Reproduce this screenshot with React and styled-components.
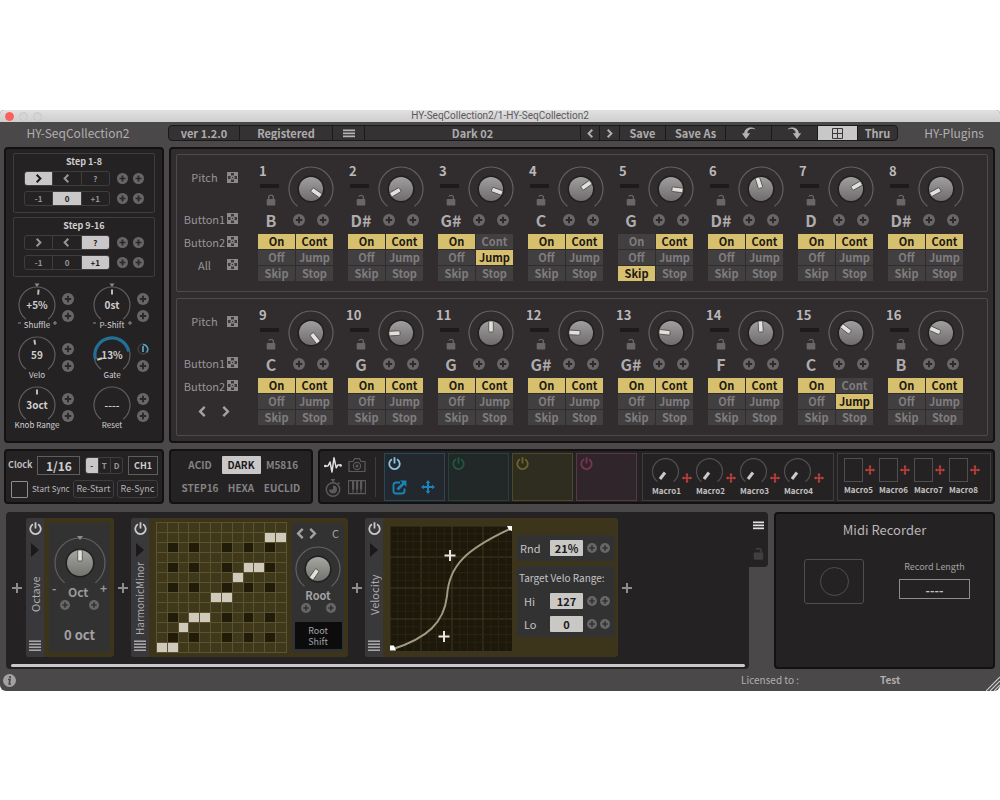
import { useState } from 'react';
import styled, { createGlobalStyle } from 'styled-components';

const GlobalStyle = createGlobalStyle`
  *, *::before, *::after { box-sizing: border-box; }
  body {
    margin: 0;
    background: #fff;
    font-family: "Noto Sans CJK JP", "Noto Sans", sans-serif;
    font-size: 12px;
    line-height: 16px;
    color: #a3a1a2;
  }
  button, input, select {
    font: inherit;
    color: inherit;
    margin: 0;
    padding: 0;
    border: 0;
    border-radius: 0;
    background: none;
    appearance: none;
  }
  button { cursor: pointer; white-space: nowrap; }
  svg { display: block; flex: none; }
  h1, h2, p { margin: 0; font: inherit; }
`;

/* ---------- shell ---------- */

const Page = styled.div`
  padding-top: 110px;
  overflow: hidden;
`;

const PluginWindow = styled.main`
  background: #4a4849;
  border-radius: 4px 4px 6px 6px;
  overflow: hidden;
`;

const TitleBar = styled.header`
  display: grid;
  grid-template-columns: 1fr auto 1fr;
  align-items: center;
  height: 12px;
  padding: 0 5px;
  background: linear-gradient(#e2e1e2, #cfcecf);
  font: 10px/12px Roboto, sans-serif;
  color: #5a5859;
`;

const Lights = styled.div`
  display: flex;
  gap: 5px;
`;

const Light = styled.span`
  width: 9px;
  height: 9px;
  border-radius: 50%;
  background: ${({ $color }) => $color};
  border: 1px solid ${({ $edge }) => $edge};
`;

const TopBar = styled.div`
  display: flex;
  align-items: center;
  height: 25px;
  padding-bottom: 3px;
`;

const Brand = styled.h1`
  width: ${({ $right }) => ($right ? 102 : 168)}px;
  padding: ${({ $right }) => ($right ? '0 0 0 10px' : '0 12px 0 0')};
  text-align: center;
  font-size: 12px;
  color: #b1afb0;
`;

const Toolbar = styled.nav`
  flex: 1;
  display: flex;
  height: 16px;
  border: 1px solid #1b191a;
  border-radius: 4px;
  background: #353233;
  overflow: hidden;
`;

const ToolButton = styled.button`
  flex: ${({ $grow }) => ($grow ? 1 : 'none')};
  width: ${({ $w }) => $w}px;
  display: flex;
  align-items: center;
  justify-content: center;
  font-size: 11px;
  font-weight: 700;
  line-height: 14px;
  color: ${({ $active }) => ($active ? '#2c292a' : '#aeacad')};
  background: ${({ $active }) => ($active ? '#c9c8c9' : 'transparent')};

  & + & { border-left: 1px solid #1b191a; }
`;

const Row = styled.div`
  display: flex;
  gap: ${({ $gap }) => $gap}px;
  padding: 0 5px 0 4px;
  margin-bottom: ${({ $below }) => $below}px;
`;

const Panel = styled.section`
  border: 2px solid #131112;
  border-radius: 4px;
  background: #242223;
`;

/* ---------- side panel ---------- */

const SidePanel = styled(Panel)`
  width: 160px;
  flex: none;
  padding: 4px 7px 0;
`;

const SideGroup = styled.div`
  height: 60px;
  margin-bottom: 4px;
  padding-left: 10px;
  border: 1px solid #3f3d3e;
  border-radius: 2px;
`;

const SideTitle = styled.h2`
  height: 17px;
  margin-left: -10px;
  text-align: center;
  font-size: 9px;
  font-weight: 700;
  color: #cfcdce;
`;

const SegmentRow = styled.div`
  display: flex;
  align-items: center;
  gap: 5px;
  height: 15px;
  margin-bottom: 5px;
`;

const Segments = styled.div`
  display: flex;
  width: 86px;
  height: 15px;
  margin-right: 2px;
  border: 1px solid #3f3d3e;
  border-radius: 3px;
  overflow: hidden;
`;

const Segment = styled.button`
  flex: 1;
  display: flex;
  align-items: center;
  justify-content: center;
  font-size: 8px;
  font-weight: 700;
  line-height: 13px;
  color: ${({ $active }) => ($active ? '#1b191a' : '#979596')};
  background: ${({ $active }) => ($active ? '#c9c7c8' : 'transparent')};

  & + & { border-left: 1px solid #3f3d3e; }
`;

const DialGrid = styled.div`
  display: grid;
  grid-template-columns: 1fr 1fr;
  grid-auto-rows: 50px;
  padding-top: 1px;
  column-gap: 8px;
`;

const DialCell = styled.div`
  display: flex;
`;

const DialFace = styled.div`
  display: grid;
  justify-items: center;
  flex: none;
  width: 50px;
  margin-left: -1px;

  > * { grid-area: 1 / 1; }
`;

const DialValue = styled.span`
  align-self: start;
  padding-top: 15px;
  font-size: 10px;
  font-weight: 700;
  color: #cfcdce;
`;

const DialLabel = styled.span`
  align-self: end;
  font-size: 8px;
  line-height: 14px;
  white-space: nowrap;
  color: #d3d1d2;
`;

const DialPluses = styled.div`
  display: flex;
  flex-direction: column;
  gap: 5px;
  padding-top: 11px;
`;

const PlusBtn = styled.button`
  display: block;
`;

/* ---------- sequencer ---------- */

const Sequencer = styled(Panel)`
  flex: 1;
  min-width: 0;
  padding: 5px;
  background: #312d2e;
`;

const StepBank = styled.div`
  display: flex;
  height: 138px;
  padding: 11px 9px 0 0;
  border: 1px solid #4d4a4b;
  border-radius: 2px;

  & + & { margin-top: 6px; }
`;

const BankLabels = styled.div`
  flex: none;
  width: 81px;
  padding-left: 7px;
`;

const BankLabel = styled.div`
  display: flex;
  align-items: center;
  gap: 2px;
  height: ${({ $first }) => ($first ? 22 : 23)}px;
  margin-bottom: ${({ $first }) => ($first ? 19 : 0)}px;
  font-size: 11px;
  white-space: nowrap;
  color: #979596;

  span {
    display: flex;
    justify-content: center;
    width: 41px;
  }
`;

const BankArrows = styled.div`
  display: flex;
  justify-content: center;
  gap: 12px;
  padding: 9px 14px 0 0;
`;

const StepGrid = styled.div`
  flex: 1;
  display: grid;
  grid-template-columns: repeat(8, 1fr);
`;

const StepCell = styled.div`
  width: 76px;
`;

const StepTop = styled.div`
  display: flex;
  height: 46px;
`;

const StepInfo = styled.div`
  display: flex;
  flex-direction: column;
  width: 30px;
`;

const StepNumber = styled.span`
  height: 18px;
  margin-left: ${({ $wide }) => ($wide ? -2 : 1)}px;
  font-size: 13px;
  font-weight: 700;
  line-height: 9px;
  color: #bab8b9;
`;

const Led = styled.span`
  width: 19px;
  height: 4px;
  margin: 0 0 6px 2px;
  background: #1d1a1b;
`;

const LockButton = styled.button`
  width: 10px;
  margin-left: 8px;
`;

const NoteRow = styled.div`
  display: flex;
  align-items: center;
  height: 16px;
  margin-bottom: 6px;
`;

const Note = styled.span`
  width: 26px;
  margin-right: 9px;
  text-align: center;
  font-size: 16px;
  font-weight: 700;
  color: #aeacad;
`;

const NotePluses = styled.div`
  display: flex;
  gap: 12px;
`;

const Modes = styled.div`
  display: grid;
  grid-template-columns: 1fr 1fr;
  grid-auto-rows: 15px;
  gap: 1px;
  width: 75px;
`;

const ModeButton = styled.button`
  line-height: 15px;
  font-size: 11px;
  font-weight: 700;
  color: ${({ $on }) => ($on ? '#1c1717' : '#7f7d7e')};
  background: ${({ $on }) => ($on ? '#d6c06d' : '#423f41')};
`;

/* ---------- middle strip ---------- */

const ClockPanel = styled(Panel)`
  width: 160px;
  flex: none;
  height: 55px;
  padding: 4px 4px 0 2px;
`;

const ClockLine = styled.div`
  display: flex;
  align-items: center;
  justify-content: space-between;
  height: 20px;
  margin-bottom: 4px;
  white-space: nowrap;
  color: #bdbbbc;
`;

const ClockLabel = styled.label`
  display: flex;
  align-items: center;
  gap: 4px;
  font-size: ${({ $small }) => ($small ? 8 : 9)}px;
  font-weight: ${({ $small }) => ($small ? 400 : 700)};
  padding-left: ${({ $small }) => ($small ? 3 : 0)}px;
`;

const BoxSelect = styled.select`
  width: ${({ $w }) => $w}px;
  height: 19px;
  border: 1px solid #5f5d5e;
  text-align: center;
  text-align-last: center;
  font-size: ${({ $small }) => ($small ? 9 : 12)}px;
  font-weight: 700;
  line-height: 17px;
  color: #cfcdce;
`;

const NoteKinds = styled(Segments)`
  width: 38px;
  height: 17px;
  margin: 0;
`;

const CheckBox = styled.input`
  width: 17px;
  height: 17px;
  border: 1px solid #8e8c8d;
  border-radius: 1px;

  &:checked { background: #8e8c8d; }
`;

const OutlineButton = styled.button`
  width: 41px;
  height: 18px;
  border: 1px solid #3f3d3e;
  border-radius: 3px;
  font-size: 9px;
  color: #b5b3b4;
`;

const ModePanel = styled(Panel)`
  flex: none;
  width: 144px;
  display: grid;
  grid-template-columns: repeat(3, 39px);
  grid-auto-rows: 18px;
  gap: 5px 2px;
  align-content: center;
  justify-content: center;
`;

const EngineButton = styled.button`
  font-size: 10px;
  font-weight: 700;
  line-height: 18px;
  border-radius: 1px;
  color: ${({ $active }) => ($active ? '#1b191a' : '#858384')};
  background: ${({ $active }) => ($active ? '#c9c7c8' : 'transparent')};
`;

const ModPanel = styled(Panel)`
  flex: 1;
  display: flex;
  align-items: center;
  padding: 0 2px 0 3px;
`;

const ModIcons = styled.div`
  display: grid;
  grid-template-columns: 20px 20px;
  gap: 6px 4px;
  padding: 0 8px 0 0;
  margin-right: 8px;
  border-right: 1px solid #3f3d3e;

  svg { margin: 0 auto; }
`;

const ModSlots = styled.div`
  flex: 1;
  display: grid;
  grid-template-columns: repeat(4, 1fr);
  gap: 3px;
  margin-right: 5px;
`;

const ModSlot = styled.div`
  display: flex;
  flex-direction: column;
  justify-content: space-between;
  height: 48px;
  padding: 3px 3px 5px;
  border: 1px solid ${({ $edge }) => $edge};
  background: ${({ $fill }) => $fill};
`;

const SlotTools = styled.div`
  display: flex;
  justify-content: space-between;
  padding: 0 6px 0 4px;
`;

const MacroBox = styled.div`
  flex: none;
  display: flex;
  width: ${({ $w }) => $w}px;
  height: 48px;
  margin-left: ${({ $gap }) => $gap}px;
  padding: 4px 0 0 ${({ $pad }) => $pad}px;
  border: 1px solid #3f3d3e;
`;

const Macro = styled.div`
  width: ${({ $w }) => $w}px;
  font-size: 8px;
  line-height: 12px;
  font-weight: 700;
  color: #c2c0c1;
`;

const MacroTop = styled.div`
  display: flex;
  align-items: center;
  gap: 2px;
  height: 24px;
  margin-bottom: 2px;
`;

const MacroDial = styled(MacroTop)`
  align-items: flex-end;
  gap: 3px;
  height: 27px;
  margin-bottom: 0;

  svg + svg { margin-bottom: 2px; }
`;

const MacroPad = styled.button`
  width: 19px;
  height: 24px;
  border: 1px solid #504e4f;
`;

/* ---------- effects rack ---------- */

const Rack = styled.section`
  flex: 1;
  display: flex;
  min-width: 0;
  margin-left: 2px;
`;

const RackBody = styled.div`
  flex: 1;
  min-width: 0;
  height: 157px;
  padding: 6px 4px 0 5px;
  border-radius: 4px 0 4px 4px;
  background: #242223;
`;

const RackTab = styled.div`
  display: flex;
  flex-direction: column;
  align-items: center;
  gap: 17px;
  width: 19px;
  height: 55px;
  padding-top: 9px;
  border-radius: 0 4px 4px 0;
  background: #242223;
`;

const Modules = styled.div`
  display: flex;
  align-items: center;
  height: 139px;
  margin-bottom: 7px;
`;

const ScrollTrack = styled.div`
  height: 3px;
  border-radius: 2px;
  background: #cbc9ca;
`;

const AddButton = styled.button`
  width: ${({ $first }) => ($first ? 15 : 17)}px;
  height: 20px;
  display: flex;
  align-items: center;
  justify-content: ${({ $first }) => ($first ? 'flex-start' : 'center')};
  padding-left: ${({ $first }) => ($first ? 1 : 0)}px;
`;

const Module = styled.article`
  display: flex;
  height: 139px;
  border-radius: 3px;
  overflow: hidden;
  background: #3c351b;
`;

const ModuleStrip = styled.div`
  display: flex;
  flex-direction: column;
  align-items: center;
  width: 18px;
  padding: 4px 0 5px;
  background: #39383a;

  svg + svg { margin-top: 8px; }
`;

const ModuleName = styled.h2`
  flex: 1;
  display: flex;
  align-items: center;
  justify-content: center;
  padding-top: ${({ $long }) => ($long ? 0 : 8)}px;
  writing-mode: vertical-rl;
  transform: rotate(180deg);
  font-size: ${({ $long }) => ($long ? 10 : 11)}px;
  line-height: 18px;
  white-space: nowrap;
  color: #aeacad;
`;

const ModuleCard = styled.div`
  display: flex;
  flex-direction: column;
  align-items: center;
  width: ${({ $w }) => $w}px;
  margin: 5px 4px 5px 5px;
  padding-top: ${({ $top }) => $top}px;
  background: #323233;
`;

const KnobCaption = styled.div`
  display: flex;
  justify-content: space-between;
  width: 55px;
  margin-top: -6px;
  font-weight: 700;
  color: #9a9899;

  span:not(:nth-child(2)) { line-height: 8px; }
`;

const PlusPair = styled.div`
  display: flex;
  gap: ${({ $gap }) => $gap}px;
`;

const OctValue = styled.output`
  margin-top: 17px;
  font-size: 13px;
  font-weight: 700;
`;

const ScaleGrid = styled.div`
  display: grid;
  grid-template-columns: repeat(12, 1fr);
  grid-template-rows: repeat(13, 9px);
  gap: 1px;
  width: 131px;
  align-self: center;
  margin-left: 7px;
  padding: 1px;
  background: #5c5330;
`;

const ScaleCell = styled.span`
  background: ${({ $kind }) =>
    $kind === 'on' ? '#cfcabc' : $kind === 'dark' ? '#211b0a' : '#40381a'};
`;

const RootHead = styled.div`
  display: flex;
  align-items: center;
  align-self: stretch;
  gap: 1px;
  margin-bottom: 7px;
  padding: 0 5px 0 3px;
  line-height: 12px;
  font-size: 11px;

  span { margin-left: auto; }
`;

const RootName = styled.span`
  margin-top: -4px;
  margin-bottom: 1px;
  line-height: 14px;
  font-size: 11px;
  font-weight: 700;
`;

const RootShift = styled.button`
  width: 47px;
  height: 27px;
  margin-top: 9px;
  background: #0d0c0d;
  font-size: 9px;
  line-height: 11px;
`;

const CurveWrap = styled.div`
  padding: 8px 5px 0 7px;
`;

const VeloSide = styled.div`
  display: flex;
  flex-direction: column;
  gap: 5px;
  padding: 17px 3px 0 0;
`;

const VeloCard = styled.div`
  display: flex;
  flex-direction: column;
  gap: 1px;
  width: 98px;
  padding: 2px;
  border-radius: 2px;
  background: #323233;
  color: #c6c4c5;
`;

const VeloTitle = styled.p`
  height: 21px;
  line-height: 19px;
  font-size: 10px;
  white-space: nowrap;
`;

const Field = styled.div`
  display: flex;
  align-items: center;
  gap: 3px;
  height: 22px;
  font-size: 11px;

  label { width: 28px; padding-left: ${({ $inset }) => ($inset ? 5 : 1)}px; }
`;

const NumberInput = styled.input`
  width: 33px;
  height: 16px;
  margin-right: 1px;
  border-radius: 1px;
  background: #c9c8c5;
  color: #1c1a1a;
  text-align: center;
  font-weight: 700;
`;

/* ---------- midi recorder and footer ---------- */

const Recorder = styled(Panel)`
  width: 221px;
  height: 157px;
  flex: none;
  padding-top: 6px;
  text-align: center;
`;

const RecorderTitle = styled.h2`
  font-size: 13px;
  line-height: 20px;
  color: #b9b7b8;
`;

const RecorderRow = styled.div`
  display: flex;
  justify-content: space-between;
  padding: 19px 23px 0 28px;
`;

const RecordButton = styled.button`
  display: grid;
  place-items: center;
  width: 60px;
  height: 45px;
  border: 1px solid #504e4f;
  border-radius: 3px;

  &::before {
    content: '';
    width: 29px;
    height: 29px;
    border: 1px solid #504e4f;
    border-radius: 50%;
  }
`;

const RecordLength = styled.label`
  display: flex;
  flex-direction: column;
  align-items: center;
  gap: 4px;
  font-size: 9px;

  input {
    width: 71px;
    height: 20px;
    border: 1px solid #8e8c8d;
    text-align: center;
    font-size: 12px;
    font-weight: 700;
    color: #c4c2c3;
  }
`;

const Footer = styled.footer`
  display: flex;
  align-items: center;
  height: 22px;
  padding-left: 3px;
  font-size: 10px;
`;

const License = styled.p`
  display: flex;
  margin-left: auto;
  color: #b1afb0;

  span { width: 139px; }
  strong { width: 106px; font-weight: 700; }
`;

/* ---------- drawings ---------- */

// point on a circle, angle in degrees clockwise from the top
const polar = (c, r, deg) => {
  const a = ((deg - 90) * Math.PI) / 180;
  return [c + r * Math.cos(a), c + r * Math.sin(a)];
};

const arcPath = (c, r, from, to) => {
  const [x1, y1] = polar(c, r, from);
  const [x2, y2] = polar(c, r, to);
  return `M${x1} ${y1}A${r} ${r} 0 ${to - from > 180 ? 1 : 0} 1 ${x2} ${y2}`;
};

function Knob({ angle, size = 46, ring = 22, body = 12, warm, tick }) {
  const c = size / 2;
  const id = `knob-${body}-${warm ? 'w' : 'n'}`;
  return (
    <svg width={size} height={size} viewBox={`0 0 ${size} ${size}`}>
      <defs>
        <linearGradient id={id} x1="0" y1="0" x2="0" y2="1">
          <stop offset="0" stopColor={warm ? '#a7a7a2' : '#a19e9f'} />
          <stop offset="1" stopColor={warm ? '#73736e' : '#6f6c6d'} />
        </linearGradient>
      </defs>
      <path d={arcPath(c, ring, -142, 142)} fill="none" stroke="#636061" strokeWidth="1.2" />
      {tick && <path d={`M${c - 3} 0h6l-3 4z`} fill="#8e8c8d" />}
      <circle cx={c} cy={c} r={body + 1.5} fill="#211e1f" />
      <circle cx={c} cy={c} r={body} fill={`url(#${id})`} />
      <rect
        x={c - 2.3}
        y={c - body}
        width="4.6"
        height="11"
        rx="1"
        fill="#e2e0da"
        stroke="#4a4748"
        strokeWidth="0.8"
        transform={`rotate(${angle} ${c} ${c})`}
      />
    </svg>
  );
}

function PlusIcon({ size = 12, fill = '#686667', cross = '#2b2829' }) {
  return (
    <svg width={size} height={size} viewBox="0 0 12 12">
      <circle cx="6" cy="6" r="6" fill={fill} />
      <path d="M6 2.8v6.4M2.8 6h6.4" stroke={cross} strokeWidth="1.9" />
    </svg>
  );
}

const Plus = ({ size, fill, cross }) => (
  <PlusBtn aria-label="Assign modulation">
    <PlusIcon size={size} fill={fill} cross={cross} />
  </PlusBtn>
);

const Dice = () => (
  <svg width="11" height="11" viewBox="0 0 11 11">
    <rect x="0.5" y="0.5" width="10" height="10" fill="#3a3738" stroke="#8a8889" />
    <g fill="#8a8889">
      <rect x="1" y="1" width="3" height="3" />
      <rect x="7" y="1" width="3" height="3" />
      <rect x="1" y="7" width="3" height="3" />
      <rect x="7" y="7" width="3" height="3" />
      <circle cx="5.5" cy="5.5" r="2.2" />
    </g>
    <circle cx="5.5" cy="5.5" r="0.8" fill="#3a3738" />
  </svg>
);

const Lock = ({ open, size = 10, color = '#686667' }) => (
  <svg width={size} height={size * 1.2} viewBox="0 0 10 12">
    <rect x="0.7" y="5" width="8.6" height="6.6" rx="0.8" fill={color} />
    <path
      d={open ? 'M3 2.6C3.4 1 6.9 .9 7.4 2.9V5' : 'M2.7 5V3.2C2.7 .4 7.3 .4 7.3 3.2V5'}
      fill="none"
      stroke={color}
      strokeWidth="1.4"
    />
  </svg>
);

const Chevron = ({ left, size = 9, color = 'currentColor', weight = 2 }) => (
  <svg width={size} height={size} viewBox="0 0 9 9">
    <path
      d={left ? 'M6.3 .8L2.6 4.5l3.7 3.7' : 'M2.7 .8l3.7 3.7-3.7 3.7'}
      fill="none"
      stroke={color}
      strokeWidth={weight}
    />
  </svg>
);

const Burger = ({ w = 12, lines = 3, color = '#b5b3b4' }) => (
  <svg width={w} height={lines * 3} viewBox={`0 0 ${w} ${lines * 3}`}>
    {Array.from({ length: lines }, (_, i) => (
      <rect key={i} y={i * 3 + 0.5} width={w} height={lines === 3 ? 1.7 : 1.4} fill={color} />
    ))}
  </svg>
);

const Power = ({ color, size = 13 }) => (
  <svg width={size} height={size} viewBox="0 0 13 13">
    <path d="M4 2.3A5.2 5.2 0 1 0 9 2.3M6.5 .3V6.5" fill="none" stroke={color} strokeWidth="1.8" />
  </svg>
);

const CurvedArrow = ({ flip }) => (
  <svg width="15" height="12" viewBox="0 0 15 12">
    <path
      d="M14.5 2.5C12 -.6 3.8 -.2 3.2 6.3H.8L5 12l4.2-5.7H6.4C6.4 2.6 10 .8 14.5 2.5z"
      fill="#b5b3b4"
      transform={flip ? 'matrix(-1 0 0 1 15 0)' : undefined}
    />
  </svg>
);

const GridIcon = () => (
  <svg width="11" height="11" viewBox="0 0 11 11">
    <path d="M.5 .5h10v10H.5zM5.5 .5v10M.5 5.5h10" fill="none" stroke="#3a3738" />
  </svg>
);

const Cross = ({ size = 10, color = '#8e8c8d', w = 2 }) => (
  <svg width={size} height={size} viewBox="0 0 10 10">
    <path d="M5 0v10M0 5h10" stroke={color} strokeWidth={w} />
  </svg>
);

const MoveCross = ({ size = 10, color }) => (
  <svg width={size} height={size} viewBox="0 0 14 14">
    <path d="M7 1v12M1 7h12" stroke={color} strokeWidth="2" />
    <path d="M7 0l2.3 3H4.7zM7 14l2.3-3H4.7zM0 7l3-2.3v4.6zM14 7l-3-2.3v4.6z" fill={color} />
  </svg>
);

const Pulse = () => (
  <svg width="18" height="16" viewBox="0 0 18 16">
    <path
      d="M1 9h3l2-4 2 10L10 .8l2.3 10L13.8 8H17"
      fill="none"
      stroke="#e2e0e1"
      strokeWidth="1.5"
      strokeLinejoin="round"
    />
    <circle cx="1.3" cy="9" r="1.3" fill="#e2e0e1" />
    <circle cx="16.7" cy="8.5" r="1.3" fill="#e2e0e1" />
  </svg>
);

const Camera = () => (
  <svg width="18" height="16" viewBox="0 0 18 16">
    <path d="M1 4.5h4l1.5-2.8h5L13 4.5h4V14.5H1z" fill="none" stroke="#5c5a5b" strokeWidth="1.2" strokeLinejoin="round" />
    <circle cx="9" cy="9" r="3.6" fill="none" stroke="#5c5a5b" strokeWidth="1.2" />
    <circle cx="9" cy="9" r="1.5" fill="#5c5a5b" />
  </svg>
);

const Stopwatch = () => (
  <svg width="16" height="18" viewBox="0 0 16 18">
    <circle cx="8" cy="10.5" r="6.7" fill="none" stroke="#5c5a5b" strokeWidth="1.5" />
    <path d="M8 10.5V6.5A4 4 0 1 1 4 10.5z" fill="#5c5a5b" />
    <path d="M6 .8h4M8 .8v3M13 3.5l1.5 1.5" stroke="#5c5a5b" strokeWidth="1.5" />
  </svg>
);

const Piano = () => (
  <svg width="18" height="16" viewBox="0 0 18 16">
    <path d="M.6 1.6h16.8v13H.6zM5 10v5M9 10v5M13 10v5" fill="none" stroke="#5c5a5b" strokeWidth="1.1" />
    <path d="M4 1.6h2.2v9H4zM8 1.6h2.2v9H8zM12 1.6h2.2v9H12z" fill="#5c5a5b" />
  </svg>
);

const OpenIcon = () => (
  <svg width="15" height="15" viewBox="0 0 15 15">
    <path
      d="M8 2.5H4a2.5 2.5 0 0 0-2.5 2.5v6A2.5 2.5 0 0 0 4 13.5h6a2.5 2.5 0 0 0 2.5-2.5V8.5"
      fill="none"
      stroke="#1a84b8"
      strokeWidth="1.9"
    />
    <path d="M5.5 9.5L11.5 3.5" stroke="#1a84b8" strokeWidth="2.8" />
    <path d="M8 .6H14.4V7z" fill="#1a84b8" />
  </svg>
);

const Triangle = () => (
  <svg width="10" height="14" viewBox="0 0 10 14">
    <path d="M1 0l8 7-8 7z" fill="#1b191a" />
  </svg>
);

function VelocityCurve() {
  const minor = Array.from({ length: 16 }, (_, i) => i * 7.75);
  return (
    <svg width="122" height="125" viewBox="0 0 122 125">
      <rect width="122" height="125" fill="#1c180b" />
      {minor.map((p, i) => (
        <path key={i} d={`M${p} 0V125M0 ${p}H122`} stroke={i % 4 === 0 ? '#403a20' : '#29230f'} strokeWidth="1" />
      ))}
      <path d="M3 123C37 112 54 97 57 70C59 40 75 24 120 3" fill="none" stroke="#a09a84" strokeWidth="2" />
      <path d="M0 119.5h4l2 5H0zM117 0h5v5l-3-1z" fill="#fff" />
      <path d="M60 24v11M54.5 29.5h11M54 105v11M48.5 110.5h11" stroke="#e8e6df" strokeWidth="2" />
    </svg>
  );
}

/* ---------- data ---------- */

const banks = [
  {
    steps: [
      { note: 'B', angle: 125, locked: true },
      { note: 'D#', angle: 240 },
      { note: 'G#', angle: 110, right: 'Jump' },
      { note: 'C', angle: 55 },
      { note: 'G', angle: 97, left: 'Skip' },
      { note: 'D#', angle: -18 },
      { note: 'D', angle: 60 },
      { note: 'D#', angle: 242 },
    ],
    labels: ['Pitch', 'Button1', 'Button2', 'All'],
  },
  {
    steps: [
      { note: 'C', angle: 142 },
      { note: 'G', angle: 267 },
      { note: 'G', angle: 0 },
      { note: 'G#', angle: 273 },
      { note: 'G#', angle: 276 },
      { note: 'F', angle: -3 },
      { note: 'C', angle: -52, right: 'Jump' },
      { note: 'B', angle: -66 },
    ],
    labels: ['Pitch', 'Button1', 'Button2'],
  },
];

const dials = [
  { name: 'Shuffle', value: '+5%', mark: 6, bipolar: true },
  { name: 'P-Shift', value: '0st', mark: 0, bipolar: true },
  { name: 'Velo', value: '59', mark: -10 },
  { name: 'Gate', value: '13%', mark: -108, amount: true },
  { name: 'Knob Range', value: '3oct', mark: 0 },
  { name: 'Reset', value: '----' },
];

const engines = ['ACID', 'DARK', 'M5816', 'STEP16', 'HEXA', 'EUCLID'];

const slots = [
  { edge: '#26485a', fill: '#22282d', power: '#8cc4e0', open: true },
  { edge: '#24423a', fill: '#222827', power: '#1c5a40' },
  { edge: '#4e4a28', fill: '#2f2c20', power: '#6e6428' },
  { edge: '#573846', fill: '#30252a', power: '#7c3450' },
];

const scaleOn = ['10,1', '11,1', '8,4', '9,4', '7,5', '5,7', '6,7', '3,9', '4,9', '2,10', '0,12', '1,12'];
const darkCols = [1, 3, 6, 8, 10];
const darkRows = [2, 4, 6, 9, 11];

const scaleCells = Array.from({ length: 13 * 12 }, (_, i) => {
  const col = i % 12;
  const row = Math.floor(i / 12);
  if (scaleOn.includes(`${col},${row}`)) return 'on';
  return darkCols.includes(col) && darkRows.includes(row) ? 'dark' : 'plain';
});

/* ---------- components ---------- */

function StepSettings({ title, direction, offset }) {
  const [dir, setDir] = useState(direction);
  const [shift, setShift] = useState(offset);

  return (
    <SideGroup>
      <SideTitle>{title}</SideTitle>
      <SegmentRow>
        <Segments>
          <Segment $active={dir === 'fwd'} onClick={() => setDir('fwd')} aria-label="Forward">
            <Chevron />
          </Segment>
          <Segment $active={dir === 'back'} onClick={() => setDir('back')} aria-label="Backward">
            <Chevron left />
          </Segment>
          <Segment $active={dir === '?'} onClick={() => setDir('?')}>?</Segment>
        </Segments>
        <Plus size={11} />
        <Plus size={11} />
      </SegmentRow>
      <SegmentRow>
        <Segments>
          {['-1', '0', '+1'].map((v) => (
            <Segment key={v} $active={shift === v} onClick={() => setShift(v)}>{v}</Segment>
          ))}
        </Segments>
        <Plus size={11} />
        <Plus size={11} />
      </SegmentRow>
    </SideGroup>
  );
}

function Dial({ name, value, mark, bipolar, amount }) {
  return (
    <DialCell>
      <DialFace>
        <svg width="50" height="50" viewBox="0 0 50 50">
          <g transform="translate(0 -2)">
            <path d={arcPath(25, 18, -142, 142)} fill="none" stroke="#605e5f" strokeWidth="1.2" />
            {amount && <path d={arcPath(25, 17, -105, 78)} fill="none" stroke="#20719a" strokeWidth="3" />}
            {mark !== undefined && (
              <path
                d="M25 9.5v5"
                stroke={amount ? '#d8d0a8' : '#bdbbbc'}
                strokeWidth="2"
                transform={`rotate(${mark} 25 25)`}
              />
            )}
            {bipolar && <path d="M22.5 3.5h5L25 7z" fill="#8e8c8d" />}
            {bipolar && <path d="M6 43h3M41 43h4M43 41v4" stroke="#8e8c8d" />}
          </g>
        </svg>
        <DialValue>{value}</DialValue>
        <DialLabel>{name}</DialLabel>
      </DialFace>
      <DialPluses>
        {amount ? (
          <svg width="12" height="12" viewBox="0 0 12 12">
            <circle cx="6" cy="6" r="5" fill="none" stroke="#4b494a" />
            <path d="M6 1.5A4.8 4.8 0 0 1 9.5 9.5" fill="none" stroke="#4aa3cf" strokeWidth="1.5" />
            <path d="M6 3v6" stroke="#8cc4e0" strokeWidth="1.3" />
          </svg>
        ) : (
          <Plus size={12} />
        )}
        <Plus size={12} />
      </DialPluses>
    </DialCell>
  );
}

function Step({ number, note, angle, locked, left: leftInit = 'On', right: rightInit = 'Cont' }) {
  const [left, setLeft] = useState(leftInit);
  const [right, setRight] = useState(rightInit);

  return (
    <StepCell>
      <StepTop>
        <StepInfo>
          <StepNumber $wide={number > 9}>{number}</StepNumber>
          <Led />
          <LockButton aria-label={`Lock step ${number}`}>
            <Lock open={!locked} />
          </LockButton>
        </StepInfo>
        <Knob angle={angle} />
      </StepTop>
      <NoteRow>
        <Note>{note}</Note>
        <NotePluses>
          <Plus />
          <Plus />
        </NotePluses>
      </NoteRow>
      <Modes>
        {[['On', 'Cont'], ['Off', 'Jump'], ['Skip', 'Stop']].map(([a, b]) => [
          <ModeButton key={a} $on={left === a} onClick={() => setLeft(a)}>{a}</ModeButton>,
          <ModeButton key={b} $on={right === b} onClick={() => setRight(b)}>{b}</ModeButton>,
        ])}
      </Modes>
    </StepCell>
  );
}

function ValueField({ id, label, value, inset }) {
  return (
    <Field $inset={inset}>
      <label htmlFor={id}>{label}</label>
      <NumberInput id={id} defaultValue={value} />
      <Plus size={10} cross="#323233" />
      <Plus size={10} cross="#323233" />
    </Field>
  );
}

function Strip({ name, long }) {
  return (
    <ModuleStrip>
      <Power color="#cbc9ca" />
      <Triangle />
      <ModuleName $long={long}>{name}</ModuleName>
      <Burger lines={4} />
    </ModuleStrip>
  );
}

export default function App() {
  const [engine, setEngine] = useState('DARK');
  const [kind, setKind] = useState('-');

  return (
    <Page>
      <GlobalStyle />
      <PluginWindow>
        <TitleBar>
          <Lights>
            <Light $color="#f9615a" $edge="#f9615a" />
            <Light $color="#d5d4d5" $edge="#c8c7c8" />
            <Light $color="#d5d4d5" $edge="#c8c7c8" />
          </Lights>
          HY-SeqCollection2/1-HY-SeqCollection2
        </TitleBar>

        <TopBar>
          <Brand>HY-SeqCollection2</Brand>
          <Toolbar>
            <ToolButton $w={70}>ver 1.2.0</ToolButton>
            <ToolButton $w={93}>Registered</ToolButton>
            <ToolButton $w={32} aria-label="Menu"><Burger /></ToolButton>
            <ToolButton $grow>Dark 02</ToolButton>
            <ToolButton $w={19} aria-label="Previous preset"><Chevron left /></ToolButton>
            <ToolButton $w={20} aria-label="Next preset"><Chevron /></ToolButton>
            <ToolButton $w={46}>Save</ToolButton>
            <ToolButton $w={60}>Save As</ToolButton>
            <ToolButton $w={46} aria-label="Undo"><CurvedArrow /></ToolButton>
            <ToolButton $w={46} aria-label="Redo"><CurvedArrow flip /></ToolButton>
            <ToolButton $w={40} $active aria-label="Grid view"><GridIcon /></ToolButton>
            <ToolButton $w={40}>Thru</ToolButton>
          </Toolbar>
          <Brand as="p" $right>HY-Plugins</Brand>
        </TopBar>

        <Row $gap={5} $below={6}>
          <SidePanel>
            <StepSettings title="Step 1-8" direction="fwd" offset="0" />
            <StepSettings title="Step 9-16" direction="?" offset="+1" />
            <DialGrid>
              {dials.map((d) => <Dial key={d.name} {...d} />)}
            </DialGrid>
          </SidePanel>

          <Sequencer>
            {banks.map((bank, b) => (
              <StepBank key={b}>
                <BankLabels>
                  {bank.labels.map((label, i) => (
                    <BankLabel key={label} $first={i === 0}>
                      <span>{label}</span>
                      <Dice />
                    </BankLabel>
                  ))}
                  {b === 1 && (
                    <BankArrows>
                      <Chevron left size={11} />
                      <Chevron size={11} />
                    </BankArrows>
                  )}
                </BankLabels>
                <StepGrid>
                  {bank.steps.map((s, i) => <Step key={i} number={b * 8 + i + 1} {...s} />)}
                </StepGrid>
              </StepBank>
            ))}
          </Sequencer>
        </Row>

        <Row $gap={5} $below={8}>
          <ClockPanel>
            <ClockLine>
              <ClockLabel htmlFor="clock">Clock</ClockLabel>
              <BoxSelect id="clock" $w={43}><option>1/16</option></BoxSelect>
              <NoteKinds>
                {['-', 'T', 'D'].map((k) => (
                  <Segment key={k} $active={kind === k} onClick={() => setKind(k)}>{k}</Segment>
                ))}
              </NoteKinds>
              <BoxSelect aria-label="Channel" $w={30} $small><option>CH1</option></BoxSelect>
            </ClockLine>
            <ClockLine>
              <ClockLabel $small><CheckBox type="checkbox" />Start Sync</ClockLabel>
              <OutlineButton>Re-Start</OutlineButton>
              <OutlineButton>Re-Sync</OutlineButton>
            </ClockLine>
          </ClockPanel>

          <ModePanel>
            {engines.map((e) => (
              <EngineButton key={e} $active={engine === e} onClick={() => setEngine(e)}>{e}</EngineButton>
            ))}
          </ModePanel>

          <ModPanel>
            <ModIcons>
              <Pulse />
              <Camera />
              <Stopwatch />
              <Piano />
            </ModIcons>
            <ModSlots>
              {slots.map((s) => (
                <ModSlot key={s.edge} $edge={s.edge} $fill={s.fill}>
                  <Power color={s.power} />
                  {s.open && (
                    <SlotTools>
                      <OpenIcon />
                      <MoveCross size={14} color="#1a84b8" />
                    </SlotTools>
                  )}
                </ModSlot>
              ))}
            </ModSlots>
            <MacroBox $w={192} $gap={0} $pad={9}>
              {[1, 2, 3, 4].map((n) => (
                <Macro key={n} $w={44}>
                  <MacroDial>
                    <svg width="27" height="27" viewBox="0 0 27 27">
                      <path d={arcPath(13.5, 13, -142, 142)} fill="none" stroke="#504e4f" strokeWidth="1.3" />
                      <path d="M13 14.5L8 21" stroke="#cbc9ca" strokeWidth="3" />
                    </svg>
                    <MoveCross color="#c4423c" />
                  </MacroDial>
                  Macro{n}
                </Macro>
              ))}
            </MacroBox>
            <MacroBox $w={154} $gap={3} $pad={6}>
              {[5, 6, 7, 8].map((n) => (
                <Macro key={n} $w={35}>
                  <MacroTop>
                    <MacroPad aria-label={`Macro ${n}`} />
                    <MoveCross color="#c4423c" />
                  </MacroTop>
                  Macro{n}
                </Macro>
              ))}
            </MacroBox>
          </ModPanel>
        </Row>

        <Row $gap={6} $below={0}>
          <Rack>
            <RackBody>
              <Modules>
                <AddButton $first aria-label="Add module"><Cross /></AddButton>
                <Module>
                  <Strip name="Octave" />
                  <ModuleCard $w={61} $top={13}>
                    <Knob angle={0} size={54} ring={25} body={13} warm tick />
                    <KnobCaption><span>-</span><span>Oct</span><span>+</span></KnobCaption>
                    <PlusPair $gap={19}>
                      <Plus size={10} cross="#323233" />
                      <Plus size={10} cross="#323233" />
                    </PlusPair>
                    <OctValue>0 oct</OctValue>
                  </ModuleCard>
                </Module>
                <AddButton aria-label="Add module"><Cross /></AddButton>
                <Module>
                  <Strip name="HarmonicMinor" long />
                  <ScaleGrid>
                    {scaleCells.map((k, i) => <ScaleCell key={i} $kind={k} />)}
                  </ScaleGrid>
                  <ModuleCard $w={52} $top={4}>
                    <RootHead>
                      <Chevron left size={11} />
                      <Chevron size={11} />
                      <span>C</span>
                    </RootHead>
                    <Knob angle={215} warm />
                    <RootName>Root</RootName>
                    <PlusPair $gap={15}>
                      <Plus size={10} cross="#323233" />
                      <Plus size={10} cross="#323233" />
                    </PlusPair>
                    <RootShift>Root<br />Shift</RootShift>
                  </ModuleCard>
                </Module>
                <AddButton aria-label="Add module"><Cross /></AddButton>
                <Module>
                  <Strip name="Velocity" />
                  <CurveWrap><VelocityCurve /></CurveWrap>
                  <VeloSide>
                    <VeloCard>
                      <ValueField id="rnd" label="Rnd" value="21%" />
                    </VeloCard>
                    <VeloCard>
                      <VeloTitle>Target Velo Range:</VeloTitle>
                      <ValueField id="hi" label="Hi" value="127" inset />
                      <ValueField id="lo" label="Lo" value="0" inset />
                    </VeloCard>
                  </VeloSide>
                </Module>
                <AddButton aria-label="Add module"><Cross /></AddButton>
              </Modules>
              <ScrollTrack />
            </RackBody>
            <RackTab>
              <Burger w={11} color="#e2e0e1" />
              <Lock open size={11} color="#423f41" />
            </RackTab>
          </Rack>

          <Recorder>
            <RecorderTitle>Midi Recorder</RecorderTitle>
            <RecorderRow>
              <RecordButton aria-label="Record" />
              <RecordLength>
                Record Length
                <input defaultValue="----" />
              </RecordLength>
            </RecorderRow>
          </Recorder>
        </Row>

        <Footer>
          <svg width="13" height="13" viewBox="0 0 13 13">
            <circle cx="6.5" cy="6.5" r="6.5" fill="#a3a1a2" />
            <path d="M5 5.5h2L6.2 10H8" fill="none" stroke="#4a4849" strokeWidth="1.6" />
            <circle cx="7" cy="3.2" r="1.1" fill="#4a4849" />
          </svg>
          <License><span>Licensed to :</span><strong>Test</strong></License>
          <svg width="14" height="22" viewBox="0 0 14 22">
            <path d="M0 22L14 8M4 22L14 12M8 22l6-6" stroke="#cbc9ca" strokeWidth="1.2" />
          </svg>
        </Footer>
      </PluginWindow>
    </Page>
  );
}
